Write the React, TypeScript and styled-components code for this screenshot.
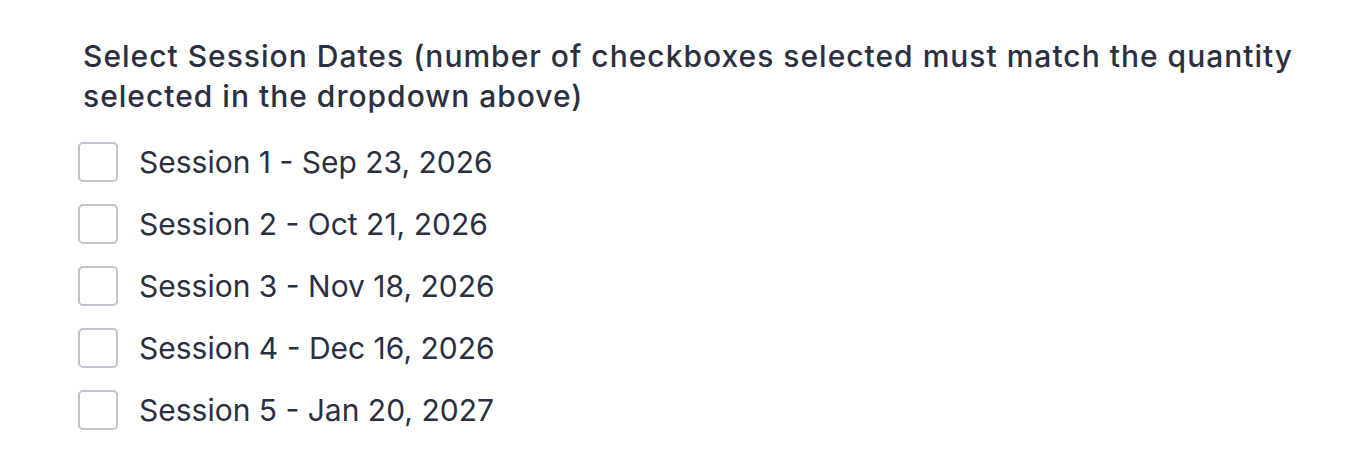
import styled, { createGlobalStyle } from "styled-components";

const sessions = [
  "Session 1 - Sep 23, 2026",
  "Session 2 - Oct 21, 2026",
  "Session 3 - Nov 18, 2026",
  "Session 4 - Dec 16, 2026",
  "Session 5 - Jan 20, 2027",
];

function App() {
  return <Page>
    <GlobalStyle />
    <Fieldset>
      <Legend>
        Select Session Dates (number of checkboxes selected must match the quantity
        selected in the dropdown above)
      </Legend>
      <List>
        {sessions.map((s) => (
          <Row key={s}>
            <Box type="checkbox" />
            <Label>{s}</Label>
          </Row>
        ))}
      </List>
    </Fieldset>
  </Page>
}

export default App;

const GlobalStyle = createGlobalStyle`
  body {
    margin: 0;
    background: #ffffff;
    font-family: Inter, "Noto Sans", sans-serif;
    color: #2b3041;
  }
`

const Page = styled.div`
  padding: 36px 40px 0 83px;
`

const Fieldset = styled.div`
  display: flex;
  flex-direction: column;
`

const Legend = styled.div`
  font-size: 30px;
  line-height: 40px;
  font-weight: 500;
  letter-spacing: 1px;
  max-width: 1240px;
`

const List = styled.div`
  display: flex;
  flex-direction: column;
  gap: 22px;
  margin-top: 26px;
  margin-left: -5px;
`

const Row = styled.label`
  display: flex;
  align-items: center;
  gap: 21px;
  cursor: pointer;
`

const Box = styled.input`
  appearance: none;
  margin: 0;
  width: 40px;
  height: 40px;
  border: 2px solid #c0c4ce;
  border-radius: 5px;
  background: #fff;
  flex-shrink: 0;
`

const Label = styled.span`
  font-size: 30px;
  line-height: 40px;
  color: #2b3041;
`
